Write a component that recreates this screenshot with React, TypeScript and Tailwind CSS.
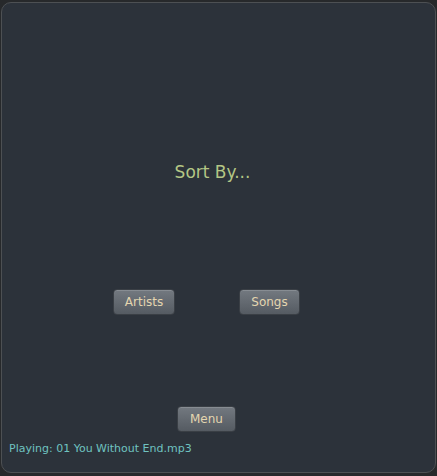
import React from 'react';

const font = { fontFamily: '"DejaVu Sans", "Liberation Sans", sans-serif' };

function PanelButton({ label, width }: { label: string; width: string }) {
  return (
    <button
      className={`${width} h-[26px] rounded-[4px] border border-[#3a3f45] bg-gradient-to-b from-[#737980] to-[#555b62] text-[12px] leading-none text-[#e4d6b0] shadow-[inset_0_1px_0_rgba(255,255,255,0.15)]`}
    >
      {label}
    </button>
  );
}

export default function App() {
  return (
    <div className="w-[437px] h-[476px] bg-[#27292b] pt-[2px] pl-[1px] overflow-hidden" style={font}>
      <div className="w-[435px] h-[471px] rounded-[10px] border border-[#4d5053] bg-[#2c323a] flex flex-col">
        <div className="pt-[159px] pr-[12px] flex justify-center">
          <span className="text-[17px] leading-[21px] text-[#b4c685]">Sort By...</span>
        </div>

        <div className="mt-[106px] pr-[24px] flex justify-center gap-[64px]">
          <PanelButton label="Artists" width="w-[62px]" />
          <PanelButton label="Songs" width="w-[61px]" />
        </div>

        <div className="mt-[91px] pr-[24px] flex justify-center">
          <PanelButton label="Menu" width="w-[59px]" />
        </div>

        <div className="mt-[9px] pl-[7px] text-[11px] leading-[16px] text-[#6fc3c0]">
          Playing: 01 You Without End.mp3
        </div>
      </div>
    </div>
  );
}
